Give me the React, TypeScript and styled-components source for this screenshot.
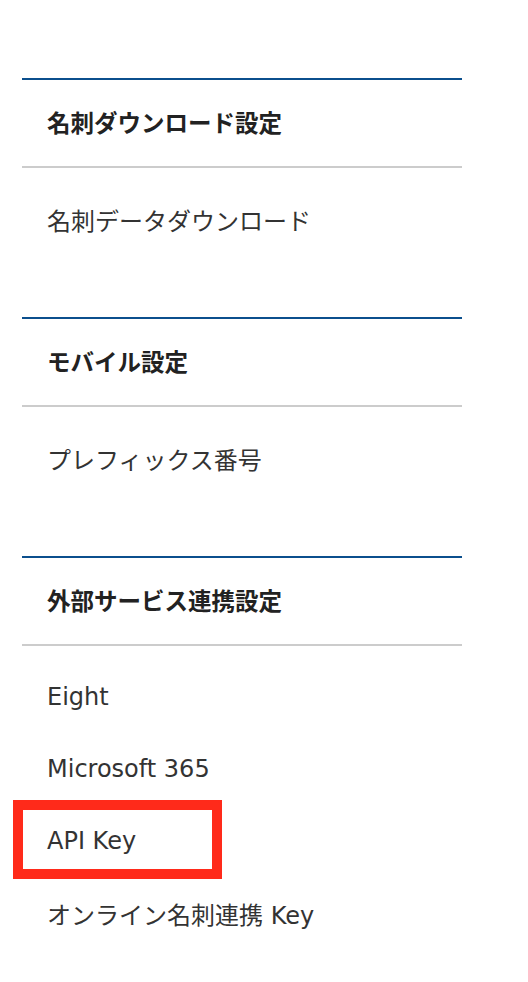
import styled, {createGlobalStyle} from "styled-components";

const GlobalStyle = createGlobalStyle`
  body {
    margin: 0;
    background: #ffffff;
    font-family: "DejaVu Sans", "Noto Sans CJK JP", sans-serif;
    color: #333333;
  }
`

type SectionType = {
  title: string
  items: string[]
}

const sections: SectionType[] = [
  {title: "名刺ダウンロード設定", items: ["名刺データダウンロード"]},
  {title: "モバイル設定", items: ["プレフィックス番号"]},
  {title: "外部サービス連携設定", items: ["Eight", "Microsoft 365", "API Key", "オンライン名刺連携 Key"]},
]

const HIGHLIGHTED = "API Key"

export default function App() {
  return (
    <Page>
      <GlobalStyle/>
      {sections.map((section) => (
        <Section key={section.title}>
          <Header>{section.title}</Header>
          <List>
            {section.items.map((item) => (
              <Item key={item}>
                {item}
                {item === HIGHLIGHTED && <Marker/>}
              </Item>
            ))}
          </List>
        </Section>
      ))}
    </Page>
  );
}

const Page = styled.div`
  width: 440px;
  padding: 78px 0 0 22px;
  display: flex;
  flex-direction: column;
  gap: 62px;
`

const Section = styled.section`
  display: flex;
  flex-direction: column;
`

const Header = styled.div`
  height: 90px;
  box-sizing: border-box;
  display: flex;
  align-items: center;
  padding: 0 0 3px 25px;
  border-top: 2px solid #0b4f8d;
  border-bottom: 2px solid #cccccc;
  font-family: "Noto Sans CJK JP", sans-serif;
  font-size: 23.5px;
  font-weight: 700;
  color: #222222;
`

const List = styled.ul`
  list-style: none;
  margin: 0;
  padding: 15px 0 0;
`

const Item = styled.li`
  position: relative;
  height: 72px;
  display: flex;
  align-items: center;
  padding-left: 25px;
  font-size: 24px;
  font-weight: 400;
  color: #333333;
`

const Marker = styled.span`
  position: absolute;
  left: -9px;
  top: -5px;
  width: 189px;
  height: 59px;
  border: 10px solid #ff2a1a;
`
